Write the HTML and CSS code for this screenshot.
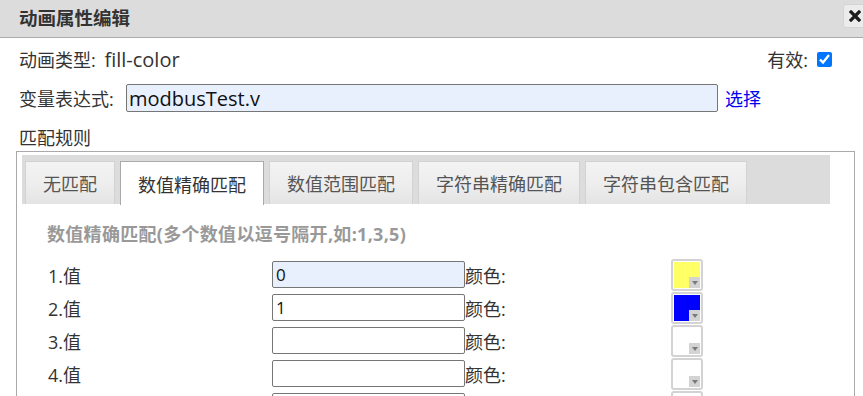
FILE: index.html
```html
<!DOCTYPE html>
<html lang="zh-CN">
<head>
<meta charset="utf-8">
<title>动画属性编辑</title>
<link rel="stylesheet" href="styles.css">
</head>
<body>
<div class="dialog">
  <div class="titlebar">
    <span class="title">动画属性编辑</span>
    <button class="close" type="button" aria-label="关闭">
      <svg width="12" height="12" viewBox="0 0 12 12"><path d="M2 2 L10 10 M10 2 L2 10" stroke="#1a1a1a" stroke-width="3.2" stroke-linecap="square"/></svg>
    </button>
  </div>
  <div class="content">
    <div class="row row-type">
      <span>动画类型: <span class="latin">fill-color</span></span>
      <label class="valid">有效: <input type="checkbox" checked></label>
    </div>
    <div class="row row-expr">
      <span class="expr-label">变量表达式:</span>
      <input class="expr autofill" type="text" value="modbusTest.v">
      <a class="pick" href="#">选择</a>
    </div>
    <div class="section-label">匹配规则</div>
    <div class="panel">
      <div class="tabs">
        <div class="tab">无匹配</div>
        <div class="tab active">数值精确匹配</div>
        <div class="tab">数值范围匹配</div>
        <div class="tab">字符串精确匹配</div>
        <div class="tab">字符串包含匹配</div>
      </div>
      <div class="tab-body">
        <div class="hint">数值精确匹配(多个数值以逗号隔开,如:1,3,5)</div>
        <div class="grid">
          <span class="lbl">1.值</span><input class="val autofill" type="text" value="0"><span class="clr">颜色:</span><span class="swatch" style="--c:#ffff66"><i></i></span>
          <span class="lbl">2.值</span><input class="val" type="text" value="1"><span class="clr">颜色:</span><span class="swatch" style="--c:#0000ff"><i></i></span>
          <span class="lbl">3.值</span><input class="val" type="text" value=""><span class="clr">颜色:</span><span class="swatch" style="--c:#ffffff"><i></i></span>
          <span class="lbl">4.值</span><input class="val" type="text" value=""><span class="clr">颜色:</span><span class="swatch" style="--c:#ffffff"><i></i></span>
          <span class="lbl">5.值</span><input class="val" type="text" value=""><span class="clr">颜色:</span><span class="swatch" style="--c:#ffffff"><i></i></span>
        </div>
      </div>
    </div>
  </div>
</div>
</body>
</html>
```
FILE: styles.css
```css
* { box-sizing: border-box; }
html, body {
  margin: 0;
  padding: 0;
  background: #fff;
  overflow: hidden;
}
body {
  font-family: "Open Sans", "Noto Sans CJK SC", sans-serif;
  font-size: 18px;
  color: #333;
  width: 863px;
  height: 396px;
}
.titlebar {
  height: 38px;
  background: #dcdcdc;
  border-bottom: 1px solid #aaa;
  display: flex;
  align-items: center;
  justify-content: space-between;
  padding-left: 19px;
}
.title {
  font-weight: bold;
  font-size: 18.5px;
  color: #333;
  margin-top: -3px;
}
.close {
  width: 24px;
  height: 24px;
  margin-right: -4px;
  margin-top: -5px;
  padding: 0;
  background: #ececec;
  border: 1px solid #d4d4d4;
  border-radius: 3px;
  display: flex;
  align-items: center;
  justify-content: center;
}
.content {
  padding: 2px 8px 0 16px;
}
.row {
  display: flex;
  align-items: center;
  height: 38px;
  padding-left: 3px;
}
.row-type {
  justify-content: space-between;
  padding-right: 23px;
}
.latin {
  font-size: 20px;
  margin-left: 4px;
}
.valid {
  display: flex;
  align-items: center;
}
.valid input {
  width: 15px;
  height: 15px;
  margin: 0 0 0 9px;
  accent-color: #0075ff;
}
.expr-label {
  width: 107px;
  flex: none;
}
.row-expr {
  padding-top: 2px;
}
.row-expr input.expr {
  width: 592px;
  height: 28px;
  font: inherit;
  font-size: 20px;
  color: #111;
  padding: 0 2px;
  border: 1px solid #767676;
  border-radius: 2px;
}
.autofill { background: #e8f0fe; }
.pick {
  color: #0000ee;
  text-decoration: none;
  margin-left: 7px;
}
.section-label {
  padding: 9px 0 0 3px;
  line-height: 26px;
  height: 35px;
}
.panel {
  border: 1px solid #aaa;
  height: 260px;
  padding: 3px 24px 0 5px;
}
.tabs {
  display: flex;
  gap: 5px;
  background: #dcdcdc;
  height: 49px;
  padding: 6px 0 0 3px;
  align-items: stretch;
}
.tab {
  padding: 0 17px;
  display: flex;
  align-items: center;
  color: #555;
  background: linear-gradient(#f3f3f3, #ededed 55%, #e4e4e4);
  border: 1px solid #d2d2d2;
  border-bottom: none;
}
.tab.active {
  background: #fff;
  border-color: #aaa;
  color: #333;
  margin-bottom: -1px;
}
.tab-body {
  padding: 17px 0 0 25px;
}
.hint {
  font-weight: bold;
  color: #999;
  line-height: 26px;
  margin-bottom: 11px;
  letter-spacing: 0.3px;
}
.grid {
  display: grid;
  grid-template-columns: 225px 193px 206px 32px;
  grid-auto-rows: 33px;
  align-items: center;
}
.lbl {
  color: #333;
  padding-left: 1px;
}
.val {
  height: 27px;
  width: 193px;
  font: inherit;
  font-size: 17px;
  color: #111;
  padding: 0 3px;
  border: 1px solid #767676;
  border-radius: 2px;
}
.val:not(.autofill) { background: #fff; }
.clr { color: #333; }
.swatch {
  position: relative;
  width: 32px;
  height: 32px;
  border: 2px solid #d3d3d3;
  border-radius: 3px;
  background: #fff;
  padding: 1px;
  display: block;
}
.swatch::before {
  content: "";
  display: block;
  width: 100%;
  height: 100%;
  background: var(--c);
}
.swatch i {
  position: absolute;
  right: 1px;
  bottom: 1px;
  width: 11px;
  height: 11px;
  background: #d3d3d3;
}
.swatch i::after {
  content: "";
  position: absolute;
  left: 3px;
  top: 4px;
  border-left: 3px solid transparent;
  border-right: 3px solid transparent;
  border-top: 4px solid #7a7a7a;
}
```
